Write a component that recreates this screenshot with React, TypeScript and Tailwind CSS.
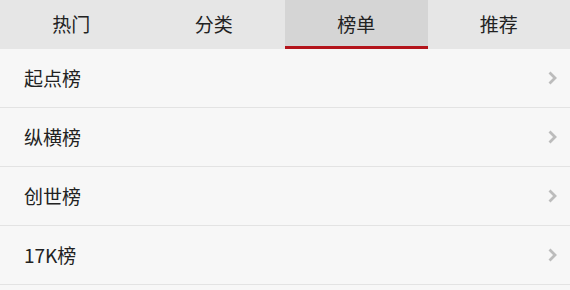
import React from 'react';

const tabs = ['热门', '分类', '榜单', '推荐'];
const rows = ['起点榜', '纵横榜', '创世榜', '17K榜'];

const Chevron = () => (
  <svg width="11" height="14" viewBox="0 0 11 14" fill="none">
    <path d="M2.5 1.5 L8 7 L2.5 12.5" stroke="#bcbcbc" strokeWidth="2.8" />
  </svg>
);

export default function App() {
  const active = 2;
  return (
    <div
      className="w-[570px] h-[290px] overflow-hidden bg-[#f7f7f7]"
      style={{ fontFamily: '"Noto Sans CJK SC", Roboto, sans-serif' }}
    >
      <div className="grid grid-cols-4 h-[49px] bg-[#e6e6e6]">
        {tabs.map((t, i) => (
          <div
            key={t}
            className={
              i === active
                ? 'flex items-center justify-center bg-[#d5d5d5] border-b-[3px] border-[#b3141b] text-[19px] text-[#222] pt-[3px]'
                : 'flex items-center justify-center text-[19px] text-[#222]'
            }
          >
            {t}
          </div>
        ))}
      </div>
      <ul>
        {rows.map(r => (
          <li
            key={r}
            className="flex items-center justify-between h-[59px] pl-[24px] pr-[12px] border-b border-[#e3e3e3] text-[19px] text-[#222]"
          >
            <span>{r}</span>
            <Chevron />
          </li>
        ))}
      </ul>
    </div>
  );
}
